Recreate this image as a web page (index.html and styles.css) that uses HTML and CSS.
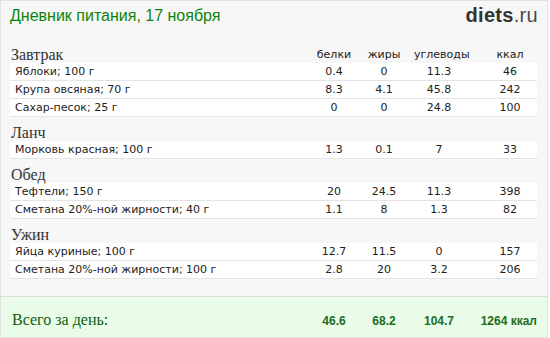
FILE: index.html
```html
<!DOCTYPE html>
<html lang="ru">
<head>
<meta charset="utf-8">
<title>Дневник питания</title>
<link rel="stylesheet" href="styles.css">
</head>
<body>
<div class="widget">
  <div class="top">
    <div class="title">Дневник питания, 17 ноября</div>
    <div class="logo"><b>diets</b>.ru</div>
  </div>
  <div class="meals">
    <div class="meal-head">
      <div class="meal-name">Завтрак</div>
      <div class="col">белки</div>
      <div class="col">жиры</div>
      <div class="col">углеводы</div>
      <div class="col kcal">ккал</div>
    </div>
    <div class="row"><div class="name">Яблоки; 100 г</div><div class="col">0.4</div><div class="col">0</div><div class="col">11.3</div><div class="col kcal">46</div></div>
    <div class="row"><div class="name">Крупа овсяная; 70 г</div><div class="col">8.3</div><div class="col">4.1</div><div class="col">45.8</div><div class="col kcal">242</div></div>
    <div class="row"><div class="name">Сахар-песок; 25 г</div><div class="col">0</div><div class="col">0</div><div class="col">24.8</div><div class="col kcal">100</div></div>

    <div class="meal-head"><div class="meal-name">Ланч</div></div>
    <div class="row"><div class="name">Морковь красная; 100 г</div><div class="col">1.3</div><div class="col">0.1</div><div class="col">7</div><div class="col kcal">33</div></div>

    <div class="meal-head"><div class="meal-name">Обед</div></div>
    <div class="row"><div class="name">Тефтели; 150 г</div><div class="col">20</div><div class="col">24.5</div><div class="col">11.3</div><div class="col kcal">398</div></div>
    <div class="row"><div class="name">Сметана 20%-ной жирности; 40 г</div><div class="col">1.1</div><div class="col">8</div><div class="col">1.3</div><div class="col kcal">82</div></div>

    <div class="meal-head"><div class="meal-name">Ужин</div></div>
    <div class="row"><div class="name">Яйца куриные; 100 г</div><div class="col">12.7</div><div class="col">11.5</div><div class="col">0</div><div class="col kcal">157</div></div>
    <div class="row"><div class="name">Сметана 20%-ной жирности; 100 г</div><div class="col">2.8</div><div class="col">20</div><div class="col">3.2</div><div class="col kcal">206</div></div>
  </div>
  <div class="total">
    <div class="total-grid">
      <div class="total-label">Всего за день:</div>
      <div class="col">46.6</div>
      <div class="col">68.2</div>
      <div class="col">104.7</div>
      <div class="col total-kcal">1264 ккал</div>
    </div>
  </div>
</div>
</body>
</html>
```
FILE: styles.css
```css
html, body {
  margin: 0;
  padding: 0;
  background: #ffffff;
}
.widget {
  width: 546px;
  height: 336px;
  border: 1px solid #e2e2e2;
  background: #f7f7f7;
  display: flex;
  flex-direction: column;
}
.top {
  height: 38px;
  display: flex;
  justify-content: space-between;
  padding: 0 9px 0 9px;
  box-sizing: border-box;
}
.title {
  font-family: "Liberation Sans", Arial, sans-serif;
  font-size: 16px;
  line-height: 22px;
  padding-top: 4px;
  color: #0b840b;
}
.logo {
  font-family: "Liberation Sans", Arial, sans-serif;
  font-size: 20px;
  line-height: 22px;
  padding-top: 3px;
  color: #4a4a4a;
  letter-spacing: 0.3px;
}
.logo b {
  color: #333333;
}
.meals {
  margin-left: 9px;
  width: 527px;
  flex: 1;
}
.meal-head, .row, .total-grid {
  display: grid;
  grid-template-columns: 1fr 40px 60px 50px 73px;
}
.meal-head {
  height: 24px;
  box-sizing: border-box;
  padding-top: 7px;
}
.meal-name {
  font-family: "Liberation Serif", "Times New Roman", serif;
  font-size: 16px;
  line-height: 17px;
  color: #333333;
  padding-left: 1px;
}
.meal-head .col {
  font-family: "DejaVu Sans", Verdana, sans-serif;
  font-size: 11px;
  line-height: 17px;
  color: #222222;
  text-align: center;
}
.row {
  background: #ffffff;
  border-bottom: 1px solid #e4e4e4;
  height: 17px;
  font-family: "DejaVu Sans", Verdana, sans-serif;
  font-size: 11px;
  line-height: 17px;
  color: #222222;
}
.name {
  padding-left: 5px;
}
.col {
  text-align: center;
}
.kcal {
  padding-left: 19px;
}
.total {
  height: 41px;
  border-top: 1px solid #dcdcdc;
  background: #e8fce8;
  box-sizing: border-box;
}
.total-grid {
  margin-left: 9px;
  width: 527px;
  padding-top: 14px;
  align-items: baseline;
}
.total-label {
  font-family: "Liberation Serif", "Times New Roman", serif;
  font-size: 16px;
  line-height: 17px;
  color: #0f5e0f;
  padding-left: 2px;
}
.total-grid .col {
  font-family: "Liberation Sans", Arial, sans-serif;
  font-weight: bold;
  font-size: 12px;
  color: #1d6b1d;
}
.total-kcal {
  text-align: right;
}
```
